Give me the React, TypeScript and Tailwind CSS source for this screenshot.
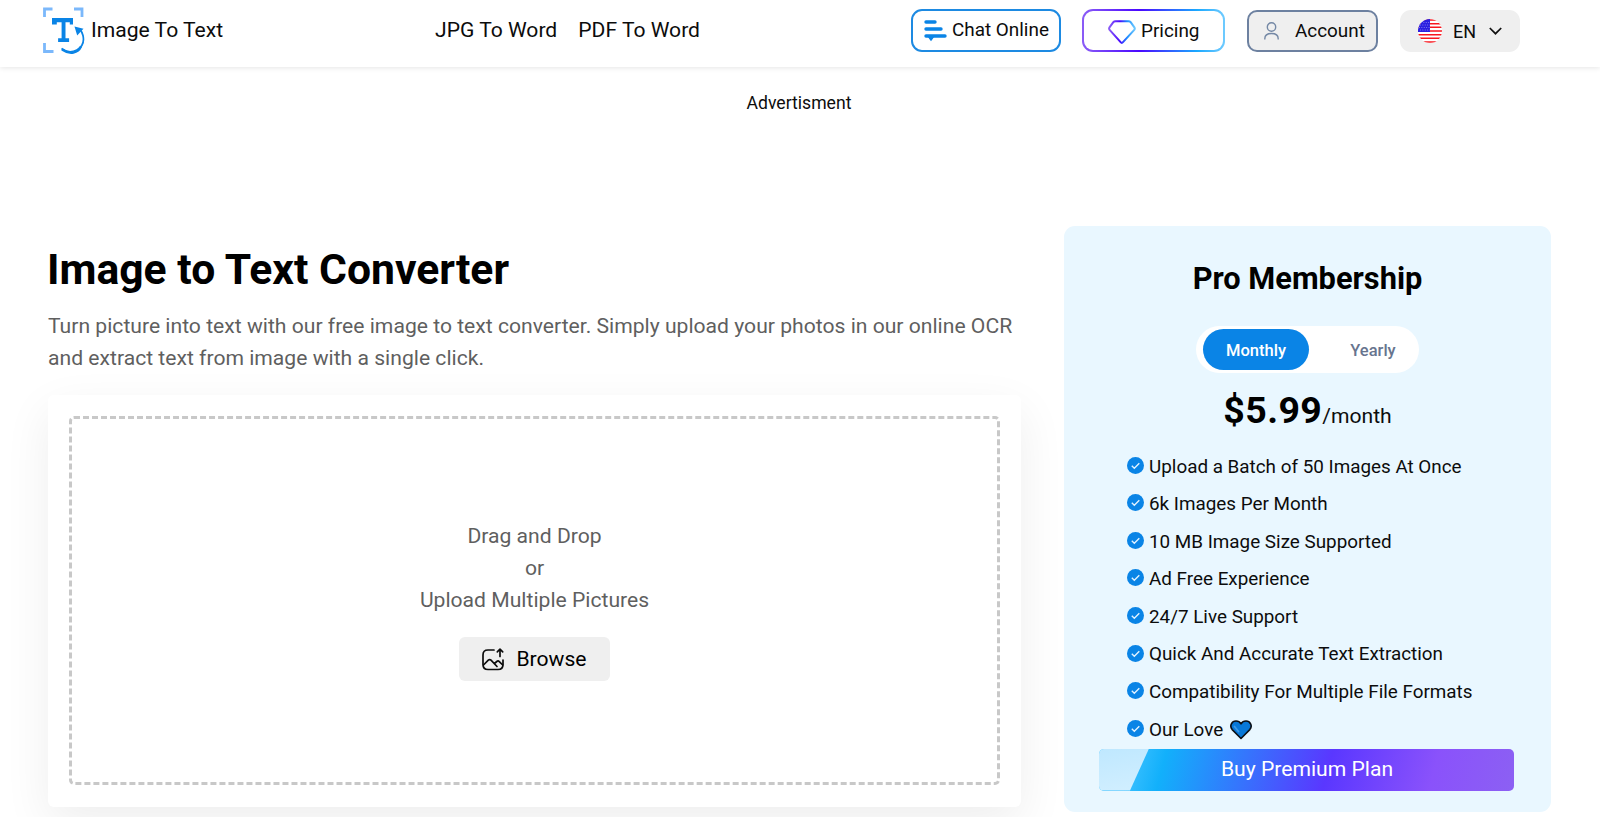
const features = [
  "Upload a Batch of 50 Images At Once",
  "6k Images Per Month",
  "10 MB Image Size Supported",
  "Ad Free Experience",
  "24/7 Live Support",
  "Quick And Accurate Text Extraction",
  "Compatibility For Multiple File Formats",
  "Our Love",
];

function LogoIcon() {
  return (
    <svg width="42" height="48" viewBox="0 0 42 48" fill="none" className="shrink-0">
      <path d="M1.500 10V2h8M31 2h8v8M1.500 36v8.500h9" stroke="#7bb8fb" strokeWidth="2.800" />
      <path d="M9 11h21v6.500h-3.200v-2.300h-4.300v16.100h3.600V35h-11v-3.700h3.500V15.200h-4.800v2.300H9z" fill="#0a84e6" />
      <path d="M18.500 41.500C28 49 43 42 40 28.500c-.6-2.600-1.600-4.500-3.300-6.500" stroke="#0a84e6" strokeWidth="1.700" />
      <path d="M19 42.500c8 5.500 16 3.500 19-3" stroke="#0a84e6" strokeWidth="2.400" />
      <path d="m31.500 19.500 9 2.200-6.300 6.800z" fill="#0a84e6" />
    </svg>
  );
}

function ChatIcon() {
  return (
    <svg width="23" height="22" viewBox="0 0 23 22" className="shrink-0">
      <path d="M2 2h9M2 9h15M2 16h19" stroke="#0a84e6" strokeWidth="3.400" strokeLinecap="round" />
      <path d="M3.500 16.500h7L7 21.300z" fill="#0a84e6" />
    </svg>
  );
}

function DiamondIcon() {
  return (
    <svg width="28" height="24" viewBox="0 0 28 24" fill="none" className="shrink-0">
      <defs>
        <linearGradient id="gem" x1="0" x2="1">
          <stop stopColor="#8b5cf6" />
          <stop offset=".42" stopColor="#4a08ff" />
          <stop offset=".7" stopColor="#1c8dff" />
          <stop offset="1" stopColor="#6cc8ff" />
        </linearGradient>
      </defs>
      <path d="M7.500 1.200h13c1 0 1.600.3 2.200 1l3.700 5.200c.6.900.6 1.600-.1 2.400L15 22.200c-.8.900-1.600.9-2.400 0L1.600 9.800c-.7-.8-.7-1.500-.1-2.400l3.800-5.200c.6-.7 1.200-1 2.200-1z" stroke="url(#gem)" strokeWidth="2" />
    </svg>
  );
}

function FlagIcon() {
  return (
    <svg width="24" height="24" viewBox="0 0 24 24" className="shrink-0">
      <clipPath id="round"><circle cx="12" cy="12" r="12" /></clipPath>
      <g clipPath="url(#round)">
        <path fill="#fff" d="M0 0h24v24H0z" />
        <path d="M0 1h24M0 4.670h24M0 8.330h24M0 12.100h24M0 15.700h24M0 19.300h24M0 23h24" stroke="#f8161e" strokeWidth="1.500" />
        <path fill="#2a1fe0" d="M0 0h12v13H0z" />
        <path d="M3 3.500h9M2 6h10M1 8.500h11M2 11h10" stroke="#9d98f5" strokeWidth=".8" strokeDasharray=".9 1.500" />
      </g>
    </svg>
  );
}

function UploadImageIcon() {
  return (
    <svg width="22" height="23" viewBox="0 0 22 23" fill="none" stroke="#0c0c0c" strokeWidth="1.700" strokeLinecap="round" strokeLinejoin="round" className="shrink-0">
      <path d="M12 2H6C2.500 2 1 3.500 1 7v9.500C1 20 2.500 21.500 6 21.500h10c3.500 0 5-1.500 5-5V12" />
      <path d="m1.500 17 4.800-4.800c1-.9 1.800-.9 2.700 0l6 6.300M12.500 15.500l2.300-2c.9-.8 1.700-.7 2.500.1l3.400 3.400" />
      <path d="M18 8.500V1.200m-2.700 2.600L18 1.200l2.700 2.600" />
    </svg>
  );
}

function CheckIcon() {
  return (
    <svg width="17" height="17" viewBox="0 0 17 17" fill="none" className="-mt-[3px] shrink-0">
      <circle cx="8.500" cy="8.500" r="8.500" fill="#0a84e6" />
      <path d="m4.800 8.800 2.500 2.400 5-5" stroke="#e2f2ff" strokeWidth="1.400" />
    </svg>
  );
}

function HeartIcon() {
  return (
    <svg width="22" height="20" viewBox="0 0 22 20" className="ml-[7px] shrink-0">
      <path d="M11 18.500 2.200 9.600C-1 5.500 2 1 6 1c2.200 0 4 1.200 5 2.800C12 2.200 13.800 1 16 1c4 0 7 4.500 3.800 8.600z" fill="#0878d8" stroke="#0b0f16" strokeWidth="1.600" strokeLinejoin="round" />
      <path d="m4.500 6.500 4 5" stroke="#3d99e6" strokeWidth="1.800" strokeLinecap="round" />
    </svg>
  );
}

function Header() {
  return (
    <header className="flex h-[67px] items-start bg-white pl-[43px] shadow-[0_1px_5px_rgba(0,0,0,0.1)]">
      <a className="flex w-[392px] items-start pt-[7px]">
        <LogoIcon />
        <span className="pl-[6px] pt-[7px] text-[21.100px] leading-[32px]">Image To Text</span>
      </a>
      <nav className="flex w-[476px] gap-[21px] pt-[14px] text-[21.100px] leading-[32px]">
        <a>JPG To Word</a>
        <a>PDF To Word</a>
      </nav>
      <div className="flex items-start">
        <button className="mt-[9px] flex h-[43px] w-[150px] items-center rounded-[11px] border-2 border-[#1d8ae2] pl-[11px] text-[18.900px]">
          <ChatIcon />
          <span className="-mt-px pl-[5px]">Chat Online</span>
        </button>
        <div className="ml-[21px] mt-[9px] h-[43px] w-[143px] rounded-[11px] bg-[linear-gradient(90deg,#8b5cf6_0%,#4a08ff_40%,#1aa8ff_80%,#6fcbff_100%)] p-[2px]">
          <button className="flex h-full w-full items-center rounded-[9px] bg-white pl-[24px] text-[18.900px]">
            <span className="pt-[3px]"><DiamondIcon /></span>
            <span className="pl-[5px] pt-px">Pricing</span>
          </button>
        </div>
        <button className="ml-[22px] mt-[10px] flex h-[42px] w-[131px] items-center rounded-[10px] border-2 border-[#6d81a0] bg-[#efefef] pl-[15px] text-[18.900px]">
          <svg width="15" height="18" viewBox="0 0 15 18" fill="none" stroke="#7488a5" strokeWidth="1.400">
            <circle cx="7.500" cy="5" r="4.200" />
            <path d="M.8 17.500v-.8c0-3.600 2.500-5.200 6.700-5.200s6.700 1.600 6.700 5.200v.8" />
          </svg>
          <span className="pl-[16px]">Account</span>
        </button>
        <button className="ml-[22px] mt-[10px] flex h-[42px] w-[120px] items-center rounded-[11px] bg-[#efefef] pl-[18px] text-[18px]">
          <FlagIcon />
          <span className="pl-[11px]">EN</span>
          <svg width="13" height="8" viewBox="0 0 13 8" fill="none" className="ml-[13px]">
            <path d="m.8 1 5.700 5.700L12.200 1" stroke="#111" strokeWidth="1.700" />
          </svg>
        </button>
      </div>
    </header>
  );
}

function Converter() {
  return (
    <section className="w-[973px] pt-[17px]">
      <h1 className="-ml-px text-[42.670px] font-bold leading-[52px] text-black">Image to Text Converter</h1>
      <p className="mt-[15px] whitespace-nowrap text-[21.140px] leading-[32px] text-[#5f5f5f]">
        Turn picture into text with our free image to text converter. Simply upload your photos in our online OCR
        <br />
        and extract text from image with a single click.
      </p>
      <div className="mt-[21px] h-[412px] rounded-[6px] bg-white p-[21px] shadow-[0_16px_48px_rgba(0,0,0,0.07)]">
        <div className="flex h-[369px] flex-col items-center rounded-[5px] border-[3px] border-dashed border-[#c8c8c8] pt-[101px] text-[21.140px] leading-[32px] text-[#5f5f5f]">
          <span>Drag and Drop</span>
          <span>or</span>
          <span>Upload Multiple Pictures</span>
          <button className="mt-[21px] flex h-[44px] w-[151px] items-center justify-center gap-[12px] rounded-[6px] bg-[#efefef] text-[21.140px] text-black">
            <UploadImageIcon />
            <span className="-mt-px">Browse</span>
          </button>
        </div>
      </div>
    </section>
  );
}

function ProCard() {
  return (
    <aside className="ml-[43px] flex h-[586px] w-[487px] flex-col items-center rounded-[11px] bg-[#e9f7ff] pt-[33px]">
      <h2 className="text-[30.800px] font-bold leading-[40px] text-black">Pro Membership</h2>
      <div className="mt-[27px] flex h-[47px] w-[223px] items-center rounded-full bg-white pl-[7px] text-[16.500px] font-medium">
        <span className="-mt-px flex h-[41px] w-[106px] items-center justify-center rounded-full bg-[#0a84e6] pt-[4px] text-white">Monthly</span>
        <span className="flex flex-1 justify-center pl-[18px] pt-[3px] text-[#67748e]">Yearly</span>
      </div>
      <div className="mt-[11px] flex items-baseline leading-[52px]">
        <span className="text-[37.500px] font-bold tracking-[0.400px] text-black">$5.99</span>
        <span className="text-[21.100px]">/month</span>
      </div>
      <ul className="mt-[6px] flex w-full flex-col pl-[63px] text-[18.850px]">
        {features.map((feature) => (
          <li key={feature} className="flex h-[37.570px] items-center gap-[5px] whitespace-nowrap">
            <CheckIcon />
            <span className="flex items-center">
              {feature}
              {feature === "Our Love" && <HeartIcon />}
            </span>
          </li>
        ))}
      </ul>
      <button className="relative flex h-[42px] w-[415px] -translate-x-px items-center justify-center overflow-hidden rounded-[5px] bg-[linear-gradient(105deg,#3bc0ff_8%,#12b0fb_16%,#5a37ff_55%,#8a52fb_80%,#8c60f3_100%)] text-[21.140px] text-white">
        <span className="absolute left-0 top-0 h-full w-[50px] bg-[linear-gradient(170deg,#bfe8ff,#d2efff)] [clip-path:polygon(0_0,100%_0,62%_100%,0_100%)]" />
        <span className="-mt-px pl-px">Buy Premium Plan</span>
      </button>
    </aside>
  );
}

export default function App() {
  return (
    <div className="h-[817px] overflow-hidden bg-white font-[Roboto,sans-serif] text-[#0c0c0c]">
      <Header />
      <div className="h-[160px] pt-[23px] text-center text-[17.600px] leading-[27px]">
        <span className="pr-[2px]">Advertisment</span>
      </div>
      <main className="-mt-px flex pl-[48px]">
        <Converter />
        <ProCard />
      </main>
    </div>
  );
}
